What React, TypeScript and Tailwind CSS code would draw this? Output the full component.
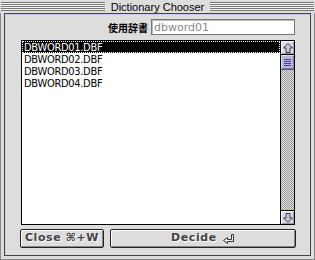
import React from 'react';

const files = ['DBWORD01.DBF', 'DBWORD02.DBF', 'DBWORD03.DBF', 'DBWORD04.DBF'];

// Scroll arrow (hollow outlined arrow)
const ScrollArrow = ({ down }: { down?: boolean }) => (
  <svg width="12" height="12" viewBox="0 0 12 12" className={down ? 'rotate-180' : ''}>
    <path d="M6 1.5 L10.5 6 H8 V10.5 H4 V6 H1.5 Z" fill="#c4c4dc" stroke="#3a3a5a" strokeWidth="1" />
  </svg>
);

const ReturnIcon = () => (
  <svg width="12" height="10" viewBox="0 0 12 10">
    <path d="M8.5 0.5 H10.5 V7.5 H4.5 V9.5 L0.5 6.5 L4.5 3.5 V5.5 H8.5 Z" fill="#eeeeee" stroke="#333" strokeWidth="1" />
  </svg>
);

const App: React.FC = () => {
  return (
    <div
      className="w-[315px] h-[260px] bg-[#dddddd] flex flex-col overflow-hidden"
      style={{ fontFamily: '"Liberation Sans", "Noto Sans CJK JP", sans-serif' }}
    >
      {/* Title bar */}
      <div className="h-[13px] flex items-center px-[1px]">
        <div className="flex-1 h-[9px] bg-[repeating-linear-gradient(to_bottom,#777777_0px,#777777_1px,#f4f4f4_1px,#f4f4f4_2px)]" />
        <div className="px-[6px] text-[11px] leading-[12px] text-black">Dictionary Chooser</div>
        <div className="flex-1 h-[9px] bg-[repeating-linear-gradient(to_bottom,#777777_0px,#777777_1px,#f4f4f4_1px,#f4f4f4_2px)]" />
      </div>

      {/* Window body */}
      <div className="flex-1 flex px-[3px] pb-[3px] border-l border-r border-b border-[#888]">
        <div className="flex-1 flex flex-col border border-[#444] bg-[#dddddd] shadow-[inset_1px_1px_0_#c8c8f0] pl-[16px] pr-[15px] pt-[5px]">
          {/* Dictionary name */}
          <div className="flex items-center justify-end gap-[3px] h-[16px]">
            <span className="text-[10px] font-bold text-black" style={{ fontFamily: '"Noto Sans CJK JP", sans-serif' }}>
              使用辞書
            </span>
            <div className="w-[144px] h-[16px] border border-[#777] bg-white flex items-center pl-[2px] shadow-[inset_1px_1px_0_#bbbbbb]">
              <span className="text-[11px] text-[#888] leading-none" style={{ fontFamily: '"DejaVu Sans", sans-serif' }}>
                dbword01
              </span>
            </div>
          </div>

          {/* File list */}
          <div className="mt-[5px] h-[185px] flex border border-black bg-white">
            <div className="flex-1 flex flex-col">
              {files.map((f, i) => (
                <div
                  key={f}
                  className={
                    i === 0
                      ? 'h-[12px] flex items-center pl-[2px] bg-black text-white outline-1 outline-dotted outline-white -outline-offset-1'
                      : 'h-[12px] flex items-center pl-[2px] text-black'
                  }
                >
                  <span
                    className="text-[11px] leading-none tracking-[-0.3px]"
                    style={{ fontFamily: '"DejaVu Sans Condensed", "DejaVu Sans", sans-serif' }}
                  >
                    {f}
                  </span>
                </div>
              ))}
            </div>
            {/* Scrollbar */}
            <div className="w-[14px] flex flex-col border-l border-black">
              <div className="h-[14px] flex items-center justify-center bg-[#dddddd] border-b border-black shadow-[inset_1px_1px_0_#ffffff,inset_-1px_-1px_0_#999999]">
                <ScrollArrow />
              </div>
              <div className="h-[15px] flex flex-col items-center justify-center gap-[1px] bg-[#b4b4dc] border-b border-[#555577] shadow-[inset_1px_1px_0_#dcdcf4,inset_-1px_-1px_0_#7777a8]">
                <div className="w-[7px] h-[1px] bg-[#444488]" />
                <div className="w-[7px] h-[1px] bg-[#444488]" />
                <div className="w-[7px] h-[1px] bg-[#444488]" />
                <div className="w-[7px] h-[1px] bg-[#444488]" />
              </div>
              <div className="flex-1 bg-[repeating-conic-gradient(#9a9a9a_0_25%,#e0e0e0_0_50%)] bg-[length:2px_2px]" />
              <div className="h-[14px] flex items-center justify-center bg-[#dddddd] border-t border-black shadow-[inset_1px_1px_0_#ffffff,inset_-1px_-1px_0_#999999]">
                <ScrollArrow down />
              </div>
            </div>
          </div>

          {/* Buttons */}
          <div className="mt-[4px] flex gap-[6px] -mr-[1px] -ml-[1px]">
            <button className="w-[84px] h-[19px] flex items-center justify-center rounded-[2px] border border-[#222] bg-[#dddddd] shadow-[inset_1px_1px_0_#ffffff,inset_-1px_-1px_0_#888888]">
              <span
                className="text-[11px] font-bold text-[#444] tracking-[0.6px] [text-shadow:1px_1px_0_#ffffff]"
                style={{ fontFamily: '"DejaVu Sans", sans-serif' }}
              >
                Close ⌘+W
              </span>
            </button>
            <button className="flex-1 h-[19px] flex items-center justify-center gap-[6px] rounded-[2px] border border-[#222] bg-[#dddddd] shadow-[inset_1px_1px_0_#ffffff,inset_-1px_-1px_0_#888888]">
              <span
                className="text-[11px] font-bold text-[#444] tracking-[0.6px] [text-shadow:1px_1px_0_#ffffff]"
                style={{ fontFamily: '"DejaVu Sans", sans-serif' }}
              >
                Decide
              </span>
              <ReturnIcon />
            </button>
          </div>
        </div>
      </div>
    </div>
  );
};

export default App;
